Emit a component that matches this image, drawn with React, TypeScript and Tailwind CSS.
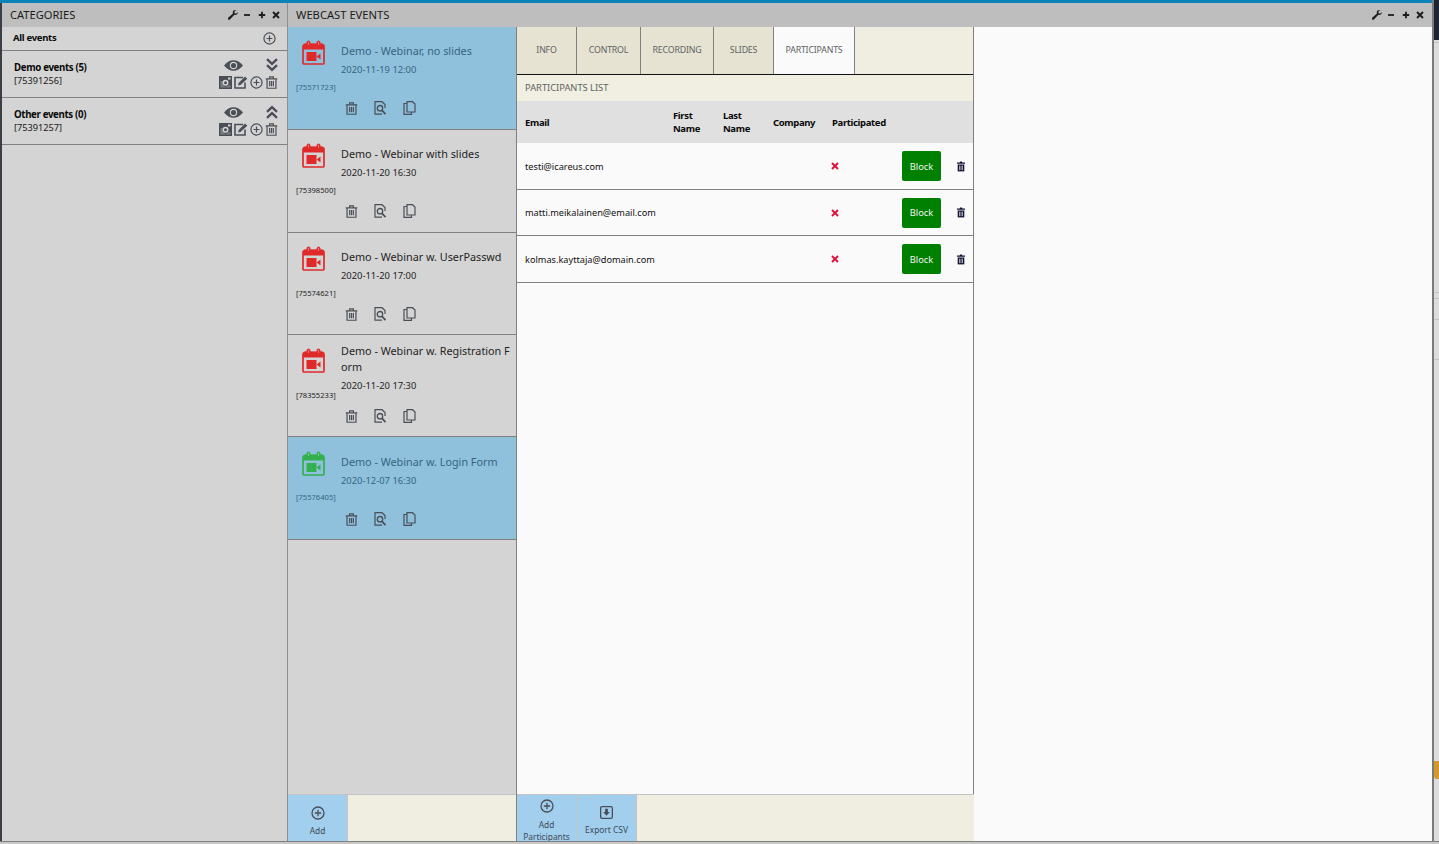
import React from "react";

const DARK = "#4a4f57";

function Wrench({ className = "" }: { className?: string }) {
  return (
    <svg viewBox="0 0 10 10" className={className} fill="#1c1c1c">
      <path d="M9.800 2.200 8 3.700 6.500 3 6.600 1.300 8.100.2C6.600-.3 4.900.7 4.800 2.200c0 .4 0 .8.2 1.200L.5 7.600c-.7.6-.7 1.300-.2 1.800s1.200.5 1.800-.2l4.300-4.400c1.800.5 4-.7 3.400-2.600z" />
    </svg>
  );
}

function WindowControls() {
  return (
    <div className="flex items-center gap-[5.500px] pb-[1px]">
      <Wrench className="w-[10px] h-[10px]" />
      <svg viewBox="0 0 8 8" className="w-[8px] h-[8px]"><path d="M1 4h6" stroke="#1c1c1c" strokeWidth="1.800" /></svg>
      <svg viewBox="0 0 8 8" className="w-[8px] h-[8px] ml-[1px]"><path d="M.8 4h6.400M4 .8v6.400" stroke="#1c1c1c" strokeWidth="1.800" /></svg>
      <svg viewBox="0 0 8 8" className="w-[8px] h-[8px] ml-[1px]"><path d="M1 1l6 6M7 1 1 7" stroke="#1c1c1c" strokeWidth="1.900" /></svg>
    </div>
  );
}

function CirclePlus({ size = 13, color = DARK }: { size?: number; color?: string }) {
  return (
    <svg viewBox="0 0 14 14" width={size} height={size} fill="none" stroke={color} strokeWidth="1.300" className="shrink-0">
      <circle cx="7" cy="7" r="6" />
      <path d="M3.800 7h6.400M7 3.800v6.400" />
    </svg>
  );
}

function Trash({ size = 13, color = DARK, sw = 1.300 }: { size?: number; color?: string; sw?: number }) {
  return (
    <svg viewBox="0 0 14 14" width={size} height={size} fill="none" stroke={color} strokeWidth={sw}>
      <path d="M.8 3.200h12.400M2.200 3.200v10h9.600v-10M5 3V1h4v2" />
      <path d="M5 5.500v5.500M7 5.500v5.500M9 5.500v5.500" />
    </svg>
  );
}

function SolidTrash() {
  return (
    <svg viewBox="0 0 10 11" width="10" height="11">
      <path d="M1 1.600h2.700L4.200.5h1.600l.5 1.100H9v1.200H1z" fill="#111133" />
      <path d="M1.700 3.500h6.600V10.400H1.700z" fill="#111133" />
      <path d="M3.500 4.700v4.500M5 4.700v4.500M6.500 4.700v4.500" stroke="#e8e8e8" strokeWidth=".7" />
    </svg>
  );
}

function Eye() {
  return (
    <svg viewBox="0 0 20 11" width="19" height="11">
      <path d="M0 5.500C3 1.800 6.300 0 10 0s7 1.800 10 5.500C17 9.200 13.700 11 10 11S3 9.200 0 5.500z" fill={DARK} />
      <circle cx="10" cy="5.500" r="3.900" fill="#d4d4d4" />
      <circle cx="10" cy="5.500" r="2.700" fill={DARK} />
    </svg>
  );
}

function Chevrons({ up = false }: { up?: boolean }) {
  return (
    <svg viewBox="0 0 12 14" width="12" height="14" fill="none" stroke={DARK} strokeWidth="2.400" className={up ? "rotate-180" : ""}>
      <path d="M1 1.200l5 4.600 5-4.600M1 7.200l5 4.600 5-4.600" />
    </svg>
  );
}

function PhotoBox() {
  return (
    <svg viewBox="0 0 13 13" width="13" height="13">
      <rect width="13" height="13" fill={DARK} />
      <path d="M1.500 11.500V5h2.600a3.200 3.200 0 0 0 5.200 4.200h2.200v2.300z" fill="#d4d4d4" opacity=".35" />
      <circle cx="6.500" cy="6.700" r="3" fill="#d4d4d4" />
      <circle cx="6.500" cy="6.700" r="1.500" fill={DARK} />
      <rect x="9" y="1.500" width="2.500" height="2" fill="#d4d4d4" />
    </svg>
  );
}

function EditBox() {
  return (
    <svg viewBox="0 0 14 13" width="14" height="13" fill="none" stroke={DARK}>
      <path d="M11 6.500V12H1V1.500h8" strokeWidth="1.600" />
      <path d="M4 9.500l.6-2.500L11 .6 13.300 2.700 6.500 9z" fill={DARK} stroke="none" />
    </svg>
  );
}

function CategoryRow({ name, id, up }: { name: string; id: string; up?: boolean }) {
  return (
    <div className="h-[47px] border-b border-[#808080] flex pl-[12px] pr-[8px]">
      <div className="pt-[10px]">
        <div className="text-[9.700px] leading-[13px] font-bold text-[#0a0a0a] tracking-[-0.35px]">{name}</div>
        <div className="text-[9.200px] leading-[13px] text-[#1a1a1a]">{id}</div>
      </div>
      <div className="ml-auto w-[60px] flex flex-col pt-[7px]">
        <div className="flex items-center justify-between h-[14px]">
          <span className="ml-[5px]"><Eye /></span>
          <span className="mr-[1px]"><Chevrons up={up} /></span>
        </div>
        <div className="mt-[4px] flex items-center gap-[2px]">
          <PhotoBox />
          <EditBox />
          <CirclePlus size={13} />
          <Trash size={13} />
        </div>
      </div>
    </div>
  );
}

function CalendarIcon({ color }: { color: string }) {
  return (
    <svg viewBox="0 0 23 25" width="23" height="25" fill="none">
      <path d="M1 6.500a2 2 0 0 1 2-2h17a2 2 0 0 1 2 2V23a1 1 0 0 1-1 1H2a1 1 0 0 1-1-1z" stroke={color} strokeWidth="1.700" />
      <path d="M1 5a2 2 0 0 1 2-1.500h17A2 2 0 0 1 22 5v4.500H1z" fill={color} />
      <rect x="5" y="1" width="3" height="6" rx="1.500" fill={color} stroke={color} strokeWidth="1" />
      <rect x="15" y="1" width="3" height="6" rx="1.500" fill={color} stroke={color} strokeWidth="1" />
      <rect x="6.200" y="2" width=".7" height="3" fill="#ffffff" opacity=".5" />
      <rect x="16.200" y="2" width=".7" height="3" fill="#ffffff" opacity=".5" />
      <rect x="4.500" y="12" width="10" height="9" fill={color} />
      <path d="M14.500 16.500l4-3v6l-4-3z" fill={color} />
    </svg>
  );
}

function SearchDoc() {
  return (
    <svg viewBox="0 0 13 14" width="13" height="14" fill="none" stroke={DARK} strokeWidth="1.200">
      <path d="M11 7V3.500L8 .7H1v12.500h7" />
      <circle cx="6" cy="7.200" r="2.700" strokeWidth="1.300" />
      <path d="M8 9.300l3.500 3.800" strokeWidth="1.700" />
    </svg>
  );
}

function CopyDoc() {
  return (
    <svg viewBox="0 0 13 14" width="13" height="14" fill="none" stroke={DARK} strokeWidth="1.200">
      <path d="M4 2.500H1v10.800h7.500V11" />
      <path d="M4 .7h5.500L12 3v8H4z" />
    </svg>
  );
}

function EventCard({
  title,
  date,
  id,
  h,
  selected,
  green,
  wrap,
}: {
  title: string;
  date: string;
  id: string;
  h: string;
  selected?: boolean;
  green?: boolean;
  wrap?: boolean;
}) {
  const txt = selected ? "text-[#36647f]" : "text-[#1f1f1f]";
  return (
    <div className={`shrink-0 ${h} border-b border-[#808080] relative ${selected ? "bg-[#8fc1dd]" : ""}`}>
      <div className={`flex pl-[14px] ${green ? "pt-[14px]" : "pt-[13px]"}`}>
        <div className="w-[39px] shrink-0">
          <CalendarIcon color={green ? "#33b04f" : "#e02a2a"} />
        </div>
        <div className={`w-[170px] ${wrap ? "-mt-[7px]" : "mt-[1px]"}`}>
          <div className={`text-[10.800px] leading-[16px] mt-[2px] break-all ${txt}`}>{title}</div>
          <div className={`text-[9.400px] leading-[14px] mt-[4px] ${txt}`}>{date}</div>
        </div>
      </div>
      <div className={`absolute left-[8px] top-[55px] text-[7.600px] leading-[10px] ${txt}`}>{id}</div>
      <div className={`absolute left-[57px] flex gap-[16px] items-center ${green ? "top-[75px]" : "top-[74px]"}`}>
        <Trash size={13} />
        <SearchDoc />
        <CopyDoc />
      </div>
    </div>
  );
}

function FooterButton({ label, icon, topPad, gap }: { label: React.ReactNode; icon: React.ReactNode; topPad: string; gap: string }) {
  return (
    <div className={`w-[60px] shrink-0 h-full bg-[#a3cfef] border-r border-[#c4c4c4] flex flex-col items-center ${topPad} overflow-hidden`}>
      {icon}
      <div className={`shrink-0 text-[8.400px] leading-[12px] text-[#3d4a55] text-center ${gap}`}>{label}</div>
    </div>
  );
}

function Tab({ label, w, active }: { label: string; w: string; active?: boolean }) {
  return (
    <div
      className={`${w} shrink-0 h-full border-r border-[#808080] flex items-center justify-center text-[8.800px] tracking-[-0.2px] text-[#5e6263] ${
        active ? "bg-[#fafafa]" : "bg-[#e6e3d3]"
      }`}
    >
      {label}
    </div>
  );
}

function ParticipantRow({ email, h }: { email: string; h: string }) {
  return (
    <div className={`${h} border-b border-[#808080] flex items-center`}>
      <div className="w-[307px] pl-[8px] pt-[1px] text-[9.200px] text-[#111]">{email}</div>
      <div className="w-[78px] pl-[7px]">
        <svg viewBox="0 0 8 8" width="8" height="8"><path d="M1 1l6 6M7 1 1 7" stroke="#dc143c" strokeWidth="2" /></svg>
      </div>
      <div className="w-[39px] h-[30px] rounded-[2px] bg-[#008000] text-[#f3f3f3] text-[9.300px] pt-[1px] flex items-center justify-center">Block</div>
      <div className="ml-[15px]"><SolidTrash /></div>
    </div>
  );
}

export default function App() {
  return (
    <div
      className="w-[1439px] h-[844px] overflow-hidden flex flex-col bg-[#c8c8c8]"
      style={{ fontFamily: '"Noto Sans", "Open Sans", sans-serif' }}
    >
      <div className="h-[841px] shrink-0 flex">
        <div className="w-[2px] shrink-0 flex flex-col">
          <div className="h-[3px] shrink-0 bg-[#0a83b8]" />
          <div className="flex-1 bg-[#3a3f45]" />
        </div>
        <div className="w-[1430px] shrink-0 flex flex-col">
          <div className="h-[3px] shrink-0 bg-[#0a83b8]" />
          <div className="flex-1 flex min-h-0">
            {/* Categories */}
            <div className="w-[285px] shrink-0 flex flex-col bg-[#d4d4d4]">
              <div className="h-[24px] shrink-0 bg-[#bebebe] flex items-center pl-[8px] pr-[7px] justify-between">
                <span className="text-[11.100px] text-[#1a1a1a]">CATEGORIES</span>
                <WindowControls />
              </div>
              <div className="h-[24px] shrink-0 border-b border-[#808080] flex items-center justify-between px-[11px]">
                <span className="text-[9.500px] font-bold text-[#0a0a0a] tracking-[-0.3px]">All events</span>
                <CirclePlus size={13} />
              </div>
              <CategoryRow name="Demo events (5)" id="[75391256]" />
              <CategoryRow name="Other events (0)" id="[75391257]" up />
            </div>
            <div className="w-[1px] shrink-0 bg-[#8f8f8f]" />
            {/* Webcast events */}
            <div className="flex-1 flex flex-col bg-[#fafafa] min-w-0">
              <div className="h-[24px] shrink-0 bg-[#bebebe] flex items-center pl-[8px] pr-[8px] justify-between">
                <span className="text-[11.200px] text-[#1a1a1a]">WEBCAST EVENTS</span>
                <WindowControls />
              </div>
              <div className="flex-1 flex min-h-0">
                {/* Event list */}
                <div className="w-[229px] shrink-0 flex flex-col border-r border-[#808080] bg-[#d4d4d4]">
                  <div className="flex-1 flex flex-col">
                    <EventCard h="h-[103px]" title="Demo - Webinar, no slides" date="2020-11-19 12:00" id="[75571723]" selected />
                    <EventCard h="h-[103px]" title="Demo - Webinar with slides" date="2020-11-20 16:30" id="[75398500]" />
                    <EventCard h="h-[102px]" title="Demo - Webinar w. UserPasswd" date="2020-11-20 17:00" id="[75574621]" />
                    <EventCard h="h-[102px]" title="Demo - Webinar w. Registration Form" date="2020-11-20 17:30" id="[78355233]" wrap />
                    <EventCard h="h-[103px]" title="Demo - Webinar w. Login Form" date="2020-12-07 16:30" id="[75576405]" selected green />
                  </div>
                  <div className="h-[47px] shrink-0 border-t border-[#c4c4c4] bg-[#f0eee0] flex">
                    <FooterButton label="Add" topPad="pt-[11px]" gap="mt-[5px]" icon={<CirclePlus size={14} />} />
                  </div>
                </div>
                {/* Details */}
                <div className="w-[457px] shrink-0 flex flex-col">
                  <div className="flex-1 flex flex-col border-r border-[#808080] min-h-0">
                    <div className="h-[48px] shrink-0 flex bg-[#f0eee0] border-b border-[#111]">
                      <Tab label="INFO" w="w-[60px]" />
                      <Tab label="CONTROL" w="w-[64px]" />
                      <Tab label="RECORDING" w="w-[73px]" />
                      <Tab label="SLIDES" w="w-[60px]" />
                      <Tab label="PARTICIPANTS" w="w-[81px]" active />
                    </div>
                    <div className="h-[26px] shrink-0 bg-[#f1efe2] flex items-center pl-[8px] text-[9.300px] text-[#5e6263]">PARTICIPANTS LIST</div>
                    <div className="h-[42px] shrink-0 bg-[#e0e0e0] flex items-center text-[9.500px] font-bold text-[#0a0a0a] leading-[13px] tracking-[-0.35px]">
                      <div className="w-[156px] pl-[8px]">Email</div>
                      <div className="w-[50px]">First<br />Name</div>
                      <div className="w-[50px]">Last<br />Name</div>
                      <div className="w-[59px]">Company</div>
                      <div>Participated</div>
                    </div>
                    <ParticipantRow email="testi@icareus.com" h="h-[47px]" />
                    <ParticipantRow email="matti.meikalainen@email.com" h="h-[46px]" />
                    <ParticipantRow email="kolmas.kayttaja@domain.com" h="h-[47px]" />
                  </div>
                  <div className="h-[47px] shrink-0 border-t border-[#c4c4c4] bg-[#f0eee0] flex">
                    <FooterButton
                      label={<>Add<br />Participants</>}
                      topPad="pt-[4px]"
                      gap="mt-[6px]"
                      icon={<CirclePlus size={14} />}
                    />
                    <FooterButton
                      label="Export CSV"
                      topPad="pt-[11px]"
                      gap="mt-[5px]"
                      icon={
                        <svg viewBox="0 0 14 14" width="13" height="13">
                          <rect x=".7" y=".7" width="12.600" height="12.600" rx="1.500" fill="none" stroke={DARK} strokeWidth="1.400" />
                          <path d="M5.500 3h3v3.500h2L7 10.500 3.500 6.500h2z" fill={DARK} />
                        </svg>
                      }
                    />
                  </div>
                </div>
                <div className="flex-1" />
              </div>
            </div>
          </div>
        </div>
        <div className="w-[2px] shrink-0 bg-[#7a7a7a]" />
        {/* Sliver of the page behind the window */}
        <div className="flex-1 flex flex-col bg-[#dcdcdc]">
          <div className="h-[40px] shrink-0 bg-[#1b2430]" />
          <div className="h-[1px] mt-[2px] shrink-0 bg-[#c4c4c4]" />
          <div className="h-[1px] mt-[249px] shrink-0 bg-[#c4c4c4]" />
          <div className="h-[1px] mt-[5px] shrink-0 bg-[#c4c4c4]" />
          <div className="h-[1px] mt-[20px] shrink-0 bg-[#c4c4c4]" />
          <div className="h-[1px] mt-[39px] shrink-0 bg-[#c4c4c4]" />
          <div className="w-[5px] h-[18px] mt-[401px] shrink-0 rounded-bl-[3px] bg-[#d19a2a]" />
        </div>
      </div>
      <div className="h-[1px] shrink-0 bg-[#808080]" />
      <div className="flex-1 bg-[#c8c8c8]" />
    </div>
  );
}
